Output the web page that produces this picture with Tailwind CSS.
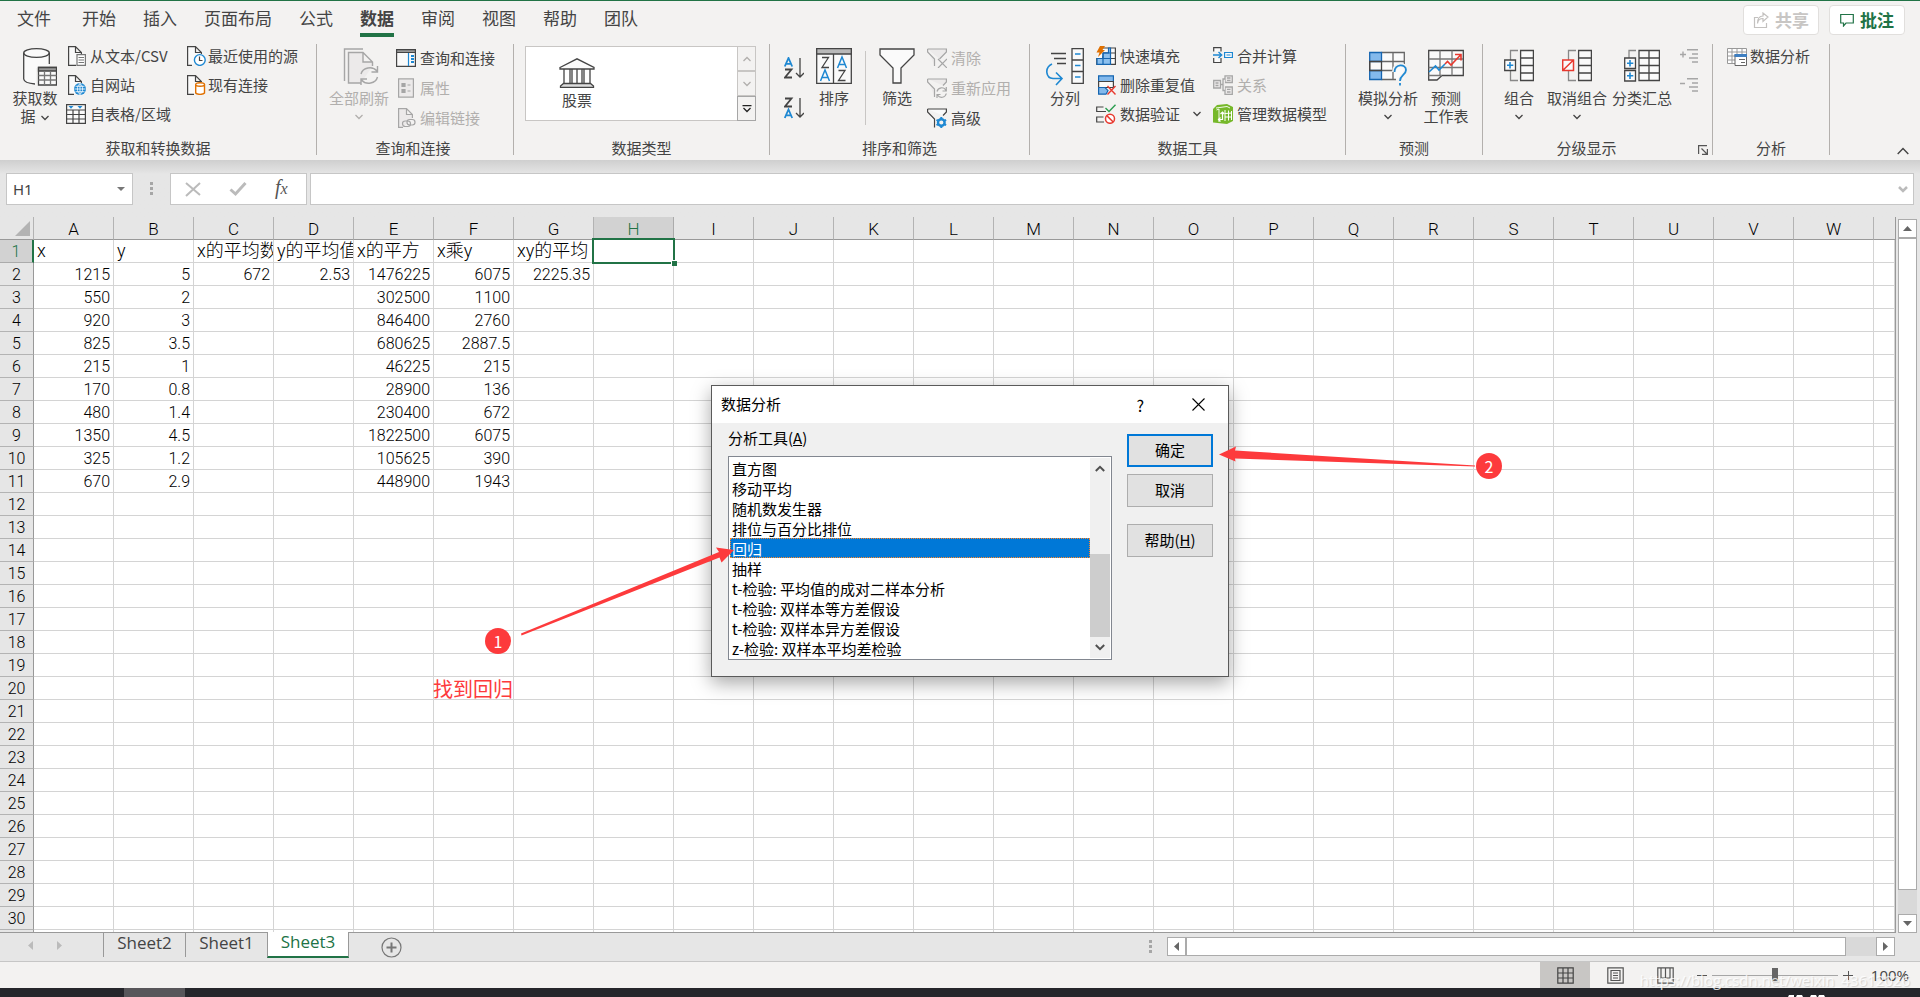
<!DOCTYPE html>
<html lang="zh-CN">
<head>
<meta charset="utf-8">
<title>Excel - 数据分析</title>
<script src="https://cdn.jsdelivr.net/npm/@tailwindcss/browser@4"></script>
</head>
<body class="relative flex h-screen min-h-[600px] flex-col overflow-hidden bg-[#e6e6e6] font-['Noto_Sans_CJK_SC',sans-serif] text-[15px] text-[#444]">

<!-- Ribbon -->
<header class="shrink-0 border-t border-[#217346] bg-[#f3f2f1]">
  <div class="flex h-9 items-start justify-between pr-[15px]">
    <nav class="flex h-9 gap-[27px] pl-[17px] text-[17px] leading-[34px]" aria-label="功能区选项卡">
      <button class="mr-1 h-[34px]">文件</button>
      <button class="h-[34px]">开始</button>
      <button class="h-[34px]">插入</button>
      <button class="h-[34px]">页面布局</button>
      <button class="h-[34px]">公式</button>
      <button class="relative h-[34px] font-bold">数据<span class="absolute inset-x-0 -bottom-0.5 h-1 bg-[#217346]"></span></button>
      <button class="h-[34px]">审阅</button>
      <button class="h-[34px]">视图</button>
      <button class="h-[34px]">帮助</button>
      <button class="h-[34px]">团队</button>
    </nav>
    <div class="flex gap-2.5 pt-1 text-[17px] leading-7 font-bold">
      <button class="flex h-[30px] w-[76px] items-center justify-center gap-1.5 rounded border border-[#e1dfdd] bg-white text-[#c8c6c4]" disabled>
        <svg class="size-4" viewBox="0 0 16 16" fill="none" stroke="#c3c1bf" stroke-width="1.2"><path d="M5 5.500H1.500V15.500H13.500V11"/><path d="M4.500 11.500C5 8 7 6.500 10 6.500V9.500L15 5L10 1V4C6.500 4 4.500 7 4.500 11.500Z"/></svg>共享</button>
      <button class="flex h-[30px] w-[76px] items-center justify-center gap-1.5 rounded border border-[#e1dfdd] bg-white text-[#217346]">
        <svg class="size-[14px]" viewBox="0 0 14 14" fill="none" stroke="#217346" stroke-width="1.200"><path d="M.7 1.500H13.300V10H6L3.500 13V10H.7Z"/></svg>批注</button>
    </div>
  </div>

  <div class="flex pt-[7px] pb-[5px] leading-[18px]">
    <section class="flex h-[111px] w-[317px] shrink-0 flex-col justify-between border-r border-[#b3b0ad]">
      <div class="flex gap-1 pl-2">
        <button class="flex w-[54px] flex-col items-center gap-[3px] pt-1">
          <svg class="ml-2 h-[38px] w-9" viewBox="0 0 36 38" fill="none" stroke="#444" stroke-width="1.300"><path d="M3 5V31C3 33.500 8 36 15 36V20H28V5" fill="#fafafa" stroke="none"/><ellipse cx="15.500" cy="5" rx="12.800" ry="4.300" fill="#fafafa"/><path d="M2.700 5V31C3 33.500 8 35.500 14 36M28.300 5V16"/><path d="M17.500 19.500H35.500V37H17.500Z" fill="#fafafa"/><path d="M17.500 19.500H35.500V23H17.500Z" fill="#999"/><path d="M17.500 27.500H35.500M17.500 32H35.500M23.500 23V37M29.500 23V37" stroke="#777"/></svg>
          <span>获取数<br>据<svg class="ml-1 inline h-2 w-2.5" viewBox="0 0 10 8" fill="none" stroke="#444" stroke-width="1.300"><path d="M1.500 2L5 5.500L8.500 2"/></svg></span>
        </button>
        <div class="flex w-[116px] flex-col gap-[9px] pt-0.5">
          <button class="flex h-5 items-center gap-1 whitespace-nowrap"><svg class="size-5 shrink-0" viewBox="0 0 20 20" fill="none" stroke="#444" stroke-width="1.200"><path d="M10 19.400H2.600V.6H9.500L15.400 6.500V8M9.500 .6V6.500H15.400" fill="#fafafa"/><path d="M11 8.600H19.400V19.400H11Z" fill="#fff" stroke="#777"/><path d="M12.500 11.500H18M12.500 14H18M12.500 16.500H18" stroke="#777"/></svg>从文本/CSV</button>
          <button class="flex h-5 items-center gap-1 whitespace-nowrap"><svg class="size-5 shrink-0" viewBox="0 0 20 20" fill="none" stroke="#444" stroke-width="1.200"><path d="M8 19.400H2.600V.6H9.500L15.400 6.500V8M9.500 .6V6.500H15.400" fill="#fafafa"/><circle cx="14" cy="14" r="6" fill="#1e88d2" stroke="none"/><path d="M14 8.500V19.500M8.500 14H19.500M9.500 11.300H18.500M9.500 16.700H18.500M14 8.500C10.500 11 10.500 17 14 19.500C17.500 17 17.500 11 14 8.500" stroke="#fff" stroke-width=".8"/></svg>自网站</button>
          <button class="flex h-5 items-center gap-1 whitespace-nowrap"><svg class="size-5 shrink-0" viewBox="0 0 20 20" fill="none" stroke="#444" stroke-width="1.200"><path d="M.6 .6H19.400V19.400H.6Z" fill="#fafafa"/><path d="M.6 6H19.400M.6 10.500H19.400M.6 15H19.400M7 6V19.400M13 6V19.400"/><path d="M2.500 2H7.500L5 4.800ZM11.500 2H16.500L14 4.800Z" fill="#1e88d2" stroke="none"/></svg>自表格/区域</button>
        </div>
        <div class="flex flex-col gap-[9px] pt-0.5">
          <button class="flex h-5 items-center gap-0.5 whitespace-nowrap"><svg class="size-5 shrink-0" viewBox="0 0 20 20" fill="none" stroke="#444" stroke-width="1.200"><path d="M6 19.400H1.600V.6H9.500L15.400 6.500V8M9.500 .6V6.500H15.400" fill="#fafafa"/><circle cx="13.800" cy="14" r="5.400" fill="#fff" stroke="#1e88d2" stroke-width="1.400"/><path d="M13.500 10.500V14.500H16.500"/></svg>最近使用的源</button>
          <button class="flex h-5 items-center gap-0.5 whitespace-nowrap"><svg class="size-5 shrink-0" viewBox="0 0 20 20" fill="none" stroke="#444" stroke-width="1.200"><path d="M8 19.400H1.600V.6H9.500L15.400 6.500V7M9.500 .6V6.500H15.400" fill="#fafafa"/><path d="M9.700 9.500V18C11 19.800 17 19.800 18.500 18V9.500" fill="#fff" stroke="#e07000" stroke-width="1.400"/><ellipse cx="14.100" cy="9.500" rx="4.400" ry="1.800" fill="#fff" stroke="#e07000" stroke-width="1.400"/></svg>现有连接</button>
        </div>
      </div>
      <h2 class="text-center leading-[14px]">获取和转换数据</h2>
    </section>

    <section class="flex h-[111px] w-[197px] shrink-0 flex-col justify-between border-r border-[#b3b0ad]">
      <div class="flex gap-1.5 pl-[11px]">
        <button class="flex w-[62px] flex-col items-center gap-[3px] pt-1 text-[#b1afad]" disabled>
          <svg class="ml-1 h-[38px] w-9" viewBox="0 0 36 38" fill="none" stroke="#a6a6a6" stroke-width="1.400"><path d="M1.500 33V1H20"/><path d="M18 35H5.500V4.500H20L29.500 14V18M20 4.500V14H29.500" fill="#eceaea"/><path d="M18 26A9 8 0 0 1 34 23M34.500 18V24H28.500M34.500 29A9 8 0 0 1 18.500 32M18 37V31H24"/></svg>
          <span>全部刷新</span>
          <svg class="mt-[3px] h-2 w-2.5" viewBox="0 0 10 8" fill="none" stroke="#b1afad" stroke-width="1.300"><path d="M1.500 2L5 5.500L8.500 2"/></svg>
        </button>
        <div class="flex flex-col gap-2.5 pt-1">
          <button class="flex h-5 items-center gap-1 whitespace-nowrap"><svg class="size-5" viewBox="0 0 20 20" fill="none" stroke="#444" stroke-width="1.200"><path d="M.6 1.600H19.400V18.400H.6Z" fill="#fafafa"/><path d="M.6 1.600H19.400V4.500H.6Z" fill="#999"/><path d="M12.500 5V18" stroke="#1e88d2"/><path d="M15 8H18M15 11H18M15 14H18" stroke="#1e88d2" stroke-width="2"/></svg>查询和连接</button>
          <button class="flex h-5 items-center gap-1 whitespace-nowrap text-[#b1afad]" disabled><svg class="size-5" viewBox="0 0 20 20" fill="none" stroke="#a6a6a6" stroke-width="1.200"><path d="M2.600 .8H17.400V19.200H2.600Z" fill="#eceaea"/><path d="M6 5.500H9V8.500H6ZM6 11.500H9V14.500H6Z" fill="#a6a6a6"/><path d="M11.500 7H14.500M11.500 13H14.500"/></svg>属性</button>
          <button class="flex h-5 items-center gap-1 whitespace-nowrap text-[#b1afad]" disabled><svg class="size-5" viewBox="0 0 20 20" fill="none" stroke="#a6a6a6" stroke-width="1.200"><path d="M7 19.400H2.600V.6H10.500L16.400 6.500V10M10.500 .6V6.500H16.400" fill="#eceaea"/><rect x="6.500" y="13" width="8" height="5.500" rx="2.700" fill="none"/><rect x="11" y="11.500" width="8" height="5.500" rx="2.700"/></svg>编辑链接</button>
        </div>
      </div>
      <h2 class="pr-1 text-center leading-[14px]">查询和连接</h2>
    </section>

    <section class="flex h-[111px] w-64 shrink-0 flex-col justify-between border-r border-[#b3b0ad]">
      <div class="mt-0.5 ml-[11px] flex h-[75px] w-[231px] border border-[#c8c6c4] bg-white">
        <button class="ml-[17px] flex w-[68px] flex-col items-center gap-[3px] pt-[11px]">
          <svg class="h-[30px] w-9" viewBox="0 0 36 30" fill="none" stroke="#444" stroke-width="1.300"><path d="M1 9.500L18 .8L35 9.500V11H1Z" fill="#fafafa"/><path d="M5 11V25M11 11V25M13 11V25M18 11V25M23 11V25M25 11V25M31 11V25"/><path d="M4.500 25.500H31.500L34.500 28V29.500H1.500V28Z" fill="#ddd"/></svg>
          <span>股票</span>
        </button>
        <div class="-my-px -mr-px ml-auto flex w-[19px] flex-col">
          <button class="grid flex-1 place-items-center border border-[#c8c6c4] bg-[#f3f2f1]" aria-label="上一行"><svg class="h-2 w-2.5" viewBox="0 0 10 8" fill="none" stroke="#b1afad" stroke-width="1.300"><path d="M1.500 6L5 2.500L8.500 6"/></svg></button>
          <button class="grid flex-1 place-items-center border border-[#c8c6c4] bg-[#f3f2f1]" aria-label="下一行"><svg class="h-2 w-2.5" viewBox="0 0 10 8" fill="none" stroke="#b1afad" stroke-width="1.300"><path d="M1.500 2L5 5.500L8.500 2"/></svg></button>
          <button class="grid flex-1 place-items-center border border-[#a6a6a6] bg-[#f3f2f1]" aria-label="其他"><svg class="h-2 w-2.5" viewBox="0 0 10 8" fill="none" stroke="#222" stroke-width="1.300"><path d="M.5 .7H9.500M1.500 3L5 6.500L8.500 3"/></svg></button>
        </div>
      </div>
      <h2 class="text-center leading-[14px]">数据类型</h2>
    </section>

    <section class="flex h-[111px] w-[260px] shrink-0 flex-col justify-between border-r border-[#b3b0ad]">
      <div class="flex pl-3.5">
        <div class="flex w-5 flex-col gap-[18px] pt-[13px]">
          <button aria-label="升序"><svg class="block h-[22px] w-5" viewBox="0 0 20 22" fill="none" stroke-width="1.800"><path d="M.8 9.500L4.500 1L8.200 9.500M2 6.800H7" stroke="#1e88d2"/><path d="M1 12.500H7.500L1 20.500H8" stroke="#444"/><path d="M16 1V20M12 16L16 20L20 16" stroke="#444" stroke-width="1.300"/></svg></button>
          <button aria-label="降序"><svg class="block h-[22px] w-5" viewBox="0 0 20 22" fill="none" stroke-width="1.800"><path d="M1 1.500H7.500L1 9.500H8" stroke="#444"/><path d="M.8 21L4.500 12.500L8.200 21M2 18.300H7" stroke="#1e88d2"/><path d="M16 1V20M12 16L16 20L20 16" stroke="#444" stroke-width="1.300"/></svg></button>
        </div>
        <button class="ml-[7px] flex w-[46px] flex-col items-center gap-[3px] pt-1">
          <svg class="h-[38px] w-9" viewBox="0 0 36 38" fill="none" stroke="#444" stroke-width="1.300"><path d="M.7 .7H35.300V35.300H.7Z" fill="#fafafa"/><path d="M.7 .7H35.300V6H.7Z" fill="#b8b8b8"/><path d="M17.500 6V35M6 9.500H12.500L6 19.500H13M22.500 22.500H29L22.500 32.500H29.500"/><path d="M4.500 33L9 22L13.500 33M6 29.500H12M21.500 20L26 9L30.500 20M23 16.500H29" stroke="#1e88d2" stroke-width="1.500"/></svg>
          <span>排序</span>
        </button>
        <div class="mt-[7px] ml-2 h-[74px] w-px bg-[#c8c6c4]"></div>
        <button class="ml-2 flex w-[46px] flex-col items-center gap-[3px] pt-1">
          <svg class="h-[38px] w-9" viewBox="0 0 36 38" fill="#fafafa" stroke="#444" stroke-width="1.300"><path d="M1 1H35V7L22 20V35H14V20L1 7Z"/></svg>
          <span>筛选</span>
        </button>
        <div class="ml-[7px] flex flex-col gap-2.5 pt-1">
          <button class="flex h-5 items-center gap-1 whitespace-nowrap text-[#b1afad]" disabled><svg class="size-5" viewBox="0 0 20 20" fill="none" stroke="#a6a6a6" stroke-width="1.200"><path d="M.6 1H19.400V4L12.500 11M7.500 18V11L.6 4V1" fill="#eceaea"/><path d="M11 11L20 20M20 11L11 20"/></svg>清除</button>
          <button class="flex h-5 items-center gap-1 whitespace-nowrap text-[#b1afad]" disabled><svg class="size-5" viewBox="0 0 20 20" fill="none" stroke="#a6a6a6" stroke-width="1.200"><path d="M.6 1H19.400V4L16 7.500M7.500 19V11L.6 4V1" fill="#eceaea"/><path d="M10 13.500A4.800 4.800 0 0 1 19 12.500M19.300 9V13H15.500M19.300 15.500A4.800 4.800 0 0 1 10.500 17M10 20V16.500H13.500"/></svg>重新应用</button>
          <button class="flex h-5 items-center gap-1 whitespace-nowrap"><svg class="size-5" viewBox="0 0 20 20" fill="none" stroke="#444" stroke-width="1.200"><path d="M.6 1H19.400V4L16 7.500M7.500 19.500V11L.6 4V1" fill="#fafafa"/><circle cx="14.300" cy="14.500" r="3.300" stroke="#1e88d2" stroke-width="2.400"/><path d="M14.300 9V11M14.300 18V20M9.500 11.800L11.300 12.800M17.300 16.200L19.100 17.200M9.500 17.200L11.300 16.200M17.300 12.800L19.100 11.800" stroke="#1e88d2" stroke-width="2"/></svg>高级</button>
        </div>
      </div>
      <h2 class="text-center leading-[14px]">排序和筛选</h2>
    </section>

    <section class="flex h-[111px] w-[316px] shrink-0 flex-col justify-between border-r border-[#b3b0ad]">
      <div class="flex gap-2 pl-3">
        <button class="flex w-[46px] flex-col items-center gap-[3px] pt-1">
          <svg class="h-[38px] w-[38px]" viewBox="0 0 38 38" fill="none" stroke="#444" stroke-width="1.300"><path d="M5 5.500H20M8 10.500H20M11 15.500H20"/><path d="M26 .7H37.300V35.300H26ZM26 12H37.300M26 23.500H37.300" fill="#fafafa"/><path d="M29 6H34.500M29 17.500H34.500M29 29H34.500M6 16C-2 20 0 30 7 30.500H15.500M10 24.500L16 30.500L10 37" stroke="#1e88d2" stroke-width="1.600"/></svg>
          <span>分列</span>
        </button>
        <div class="flex w-[109px] flex-col gap-[9px] pt-0.5">
          <button class="flex h-5 items-center gap-1 whitespace-nowrap"><svg class="size-5 shrink-0" viewBox="0 0 20 20" fill="none" stroke="#444" stroke-width="1.200"><path d="M6 2H19.400V18.400H.8V12" fill="#fafafa"/><path d="M.8 12.500H19.400M7 7H19.400M13.500 2V18.400M7 10V18.400"/><path d="M12.500 2H14.500V18.400H1V12.500H7V7H12.500Z" stroke="#1565b0" fill="#8cc0ee"/><path d="M1 12.500H14M7 7V18.400M7 7H14" stroke="#1565b0"/><path d="M4 0H9L6.500 4H9L2 11L3.500 6.500H.5Z" fill="#e07000" stroke="none"/></svg>快速填充</button>
          <button class="flex h-5 items-center gap-1 whitespace-nowrap"><svg class="size-5 shrink-0" viewBox="0 0 20 20" fill="none" stroke="#1565b0" stroke-width="1.200"><path d="M2.600 .8H17.400V6.500H2.600Z" fill="#83b9ec"/><path d="M2.600 6.500H17.400V12.500H2.600Z" fill="#fafafa" stroke="#444"/><path d="M10 19.200H2.600V12.500H9L12 15.500Z" fill="#83b9ec"/><path d="M11.500 11L19.500 19.500M19.500 11L11.500 19.500" stroke="#e8392f" stroke-width="1.400"/></svg>删除重复值</button>
          <button class="flex h-5 items-center gap-1 whitespace-nowrap"><svg class="size-5 shrink-0" viewBox="0 0 20 20" fill="none" stroke="#444" stroke-width="1.200"><path d="M7.500 3H.7V7.500H10M7.500 13H.7V18H8"/><path d="M9.500 4L13 7.500L19.500 .8" stroke="#2a9d4f" stroke-width="1.400"/><circle cx="14" cy="14.800" r="4.500" fill="#fff" stroke="#e8392f" stroke-width="1.500"/><path d="M10.800 11.600L17.200 18" stroke="#e8392f" stroke-width="1.500"/></svg>数据验证<svg class="ml-2 h-2 w-2.5 shrink-0" viewBox="0 0 10 8" fill="none" stroke="#444" stroke-width="1.300"><path d="M1.500 2L5 5.500L8.500 2"/></svg></button>
        </div>
        <div class="flex flex-col gap-[9px] pt-0.5">
          <button class="flex h-5 items-center gap-1 whitespace-nowrap"><svg class="size-5 shrink-0" viewBox="0 0 20 20" fill="none" stroke="#444" stroke-width="1.200"><path d="M.7 5.500V1.600H8V5.500M.7 12V16.500H8V12" fill="#fafafa"/><path d="M0 9H8.500M5.500 6L8.700 9L5.500 12" stroke="#1e88d2" stroke-width="1.400"/><path d="M11.600 6.500H19.400V11.500H11.600ZM13.500 9H17.500" stroke="#1e88d2" fill="#fafafa"/></svg>合并计算</button>
          <button class="flex h-5 items-center gap-1 whitespace-nowrap text-[#b1afad]" disabled><svg class="size-5 shrink-0" viewBox="0 0 20 20" fill="#eceaea" stroke="#a6a6a6" stroke-width="1.300"><path d="M.7 5.500H7.500V13H.7ZM12 .8H19.300V7.500H12ZM12 12H19.300V19.300H12Z"/><path d="M7.500 9.500H10M12 4H10V15.500H12M2.500 8H5.500M2.500 10.500H5.500M14 3H17.500M14 5.300H17.500M14 14.300H17.500M14 17H17.500"/></svg>关系</button>
          <button class="flex h-5 items-center gap-1 whitespace-nowrap"><svg class="size-5 shrink-0" viewBox="0 0 20 20"><path d="M0 5L4 1L14 0L20 3V17L14 20L0 18.500Z" fill="#76b82a"/><path d="M3.500 6L6 5V18M3 4L14 2.500L17 4" fill="none" stroke="#fff" stroke-width=".9"/><path d="M12 6V17M15.500 6.500V16.500M18.500 7V16M12 9.500L19 9M12 13H19" stroke="#fff" stroke-width="1"/><path d="M6 15.500H9.500V8.500M7.500 10L9.500 8L11.300 10M7.500 13.500L5.500 15.500L7.500 17.500" fill="none" stroke="#fff" stroke-width="1.200"/></svg>管理数据模型</button>
        </div>
      </div>
      <h2 class="text-center leading-[14px]">数据工具</h2>
    </section>

    <section class="flex h-[111px] w-[137px] shrink-0 flex-col justify-between border-r border-[#b3b0ad]">
      <div class="flex gap-[3px] pl-[11px]">
        <button class="flex w-[62px] flex-col items-center gap-[3px] pt-1">
          <svg class="h-[38px] w-[38px]" viewBox="0 0 38 38" fill="none" stroke="#444" stroke-width="1.300"><path d="M.7 4.500H35.300V31.500H.7Z" fill="#fafafa" stroke="none"/><path d="M12.500 4.500H35.300V16M12.500 31.500H27M12.500 13.500H35.300M.7 13.500V22.500M12.500 22.500H26M24 4.500V31.500" stroke="#666"/><path d="M.7 4.500H12.500V13.500H.7ZM.7 22.500H12.500V31.500H.7Z" fill="#83b9ec" stroke="#1565b0"/><path d="M.7 13.500H12.500V22.500H.7Z" stroke="#444"/><path d="M25 24C25 14.500 37 15 37 22C37 27 31 27 31 33M31 35.500V38" stroke="#f3f2f1" stroke-width="4"/><path d="M25.500 24C25.500 15.500 37 15.500 37 22C37 27 31 27 31 33M31 35V37.500" stroke="#1e88d2" stroke-width="1.800"/></svg>
          <span>模拟分析</span>
          <svg class="mt-[3px] h-2 w-2.5" viewBox="0 0 10 8" fill="none" stroke="#444" stroke-width="1.300"><path d="M1.500 2L5 5.500L8.500 2"/></svg>
        </button>
        <button class="flex w-12 flex-col items-center gap-[3px] pt-1">
          <svg class="h-[38px] w-9" viewBox="0 0 36 38" fill="none" stroke="#444" stroke-width="1.300"><path d="M.7 2.500H35.300V27.500H14L9 32H.7Z" fill="#fafafa"/><path d="M.7 11H35M.7 19.500H35M12 2.500V27.500M24 2.500V27.500M.7 27.500H14" stroke="#777"/><path d="M1 24L7.500 18L11 22L17 16" stroke="#1e88d2" stroke-width="1.600"/><path d="M17 16L19.500 13.500L23 17L32.500 7M27 6.500H33V12.500" stroke="#e8392f" stroke-width="1.600"/></svg>
          <span class="whitespace-nowrap">预测<br>工作表</span>
        </button>
      </div>
      <h2 class="text-center leading-[14px]">预测</h2>
    </section>

    <section class="flex h-[111px] w-[230px] shrink-0 flex-col justify-between border-r border-[#b3b0ad]">
      <div class="flex pl-4">
        <button class="flex w-10 flex-col items-center gap-[3px] pt-1">
          <svg class="h-[38px] w-[30px]" viewBox="0 0 30 38" fill="#fafafa" stroke="#444" stroke-width="1.300"><path d="M14 2.500H6.500V32.500H14" fill="none" stroke="#888"/><path d="M16.600 2.500H29.400V32.500H16.600ZM16.600 10H29.400M16.600 17.500H29.400M16.600 25H29.400"/><path d="M.7 12H11.500V22.500H.7Z"/><path d="M6 14V20.500M3 17.200H9.300" stroke="#1e88d2" stroke-width="1.600"/></svg>
          <span>组合</span>
          <svg class="mt-[3px] h-2 w-2.5" viewBox="0 0 10 8" fill="none" stroke="#444" stroke-width="1.300"><path d="M1.500 2L5 5.500L8.500 2"/></svg>
        </button>
        <button class="ml-[7px] flex w-[62px] flex-col items-center gap-[3px] pt-1">
          <svg class="h-[38px] w-[30px]" viewBox="0 0 30 38" fill="#fafafa" stroke="#444" stroke-width="1.300"><path d="M14 2.500H6.500V32.500H14" fill="none" stroke="#888"/><path d="M16.600 2.500H29.400V32.500H16.600ZM16.600 10H29.400M16.600 17.500H29.400M16.600 25H29.400"/><path d="M.7 12H11.500V22.500H.7ZM.7 22.500L11.500 12" stroke="#e8392f" stroke-width="1.500"/></svg>
          <span>取消组合</span>
          <svg class="mt-[3px] h-2 w-2.5" viewBox="0 0 10 8" fill="none" stroke="#444" stroke-width="1.300"><path d="M1.500 2L5 5.500L8.500 2"/></svg>
        </button>
        <button class="ml-[3px] flex w-[62px] flex-col items-center gap-[3px] pt-1">
          <svg class="h-[38px] w-9" viewBox="0 0 36 38" fill="#fafafa" stroke="#444" stroke-width="1.300"><path d="M12 2.500H5V10" fill="none" stroke="#888"/><path d="M15 2.500H35.400V32.500H15ZM15 10H35.400M15 17.500H35.400M15 25H35.400M25 2.500V32.500"/><path d="M.7 10H11.500V20.500H.7ZM.7 22.500H11.500V33H.7Z"/><path d="M6 12V18.500M3 15.200H9.300M6 24.500V31M3 27.800H9.300" stroke="#1e88d2" stroke-width="1.600"/></svg>
          <span>分类汇总</span>
        </button>
        <div class="ml-[7px] flex flex-col gap-[15px] pt-[5px]">
          <button disabled aria-label="显示明细数据"><svg class="block h-3.5 w-[18px]" viewBox="0 0 18 14" fill="none" stroke="#a6a6a6" stroke-width="1.400"><path d="M0 5.500H6M3 2.500V8.500M7 .8H18M12 5H18M9 9H18M12 13H18"/></svg></button>
          <button disabled aria-label="隐藏明细数据"><svg class="block h-3.5 w-[18px]" viewBox="0 0 18 14" fill="none" stroke="#a6a6a6" stroke-width="1.400"><path d="M0 5.500H5M7 .8H18M12 5H18M9 9H18M12 13H18"/></svg></button>
        </div>
      </div>
      <div class="flex items-end pr-1">
        <h2 class="flex-1 pr-2 text-center leading-[14px]">分级显示</h2>
        <button aria-label="分级显示设置"><svg class="block size-2.5" viewBox="0 0 10 10" fill="none" stroke="#555" stroke-width="1.200"><path d="M.6 9V.6H9M3.500 3.500L9 9M9.400 4V9.400H4"/></svg></button>
      </div>
    </section>

    <section class="flex h-[111px] w-[117px] shrink-0 flex-col justify-between border-r border-[#b3b0ad]">
      <div class="pt-0.5 pl-3.5">
        <button class="flex h-5 items-center gap-[3px] whitespace-nowrap"><svg class="size-5 shrink-0" viewBox="0 0 20 20" fill="none" stroke="#999"><path d="M.5 2.500H19.500V17.500H.5ZM.5 6H19.500M.5 10H19.500M.5 14H19.500M5 2.500V17.500M10 2.500V17.500M15 2.500V17.500" fill="#fff"/><path d="M8 8.500H19.500V19.500H8Z" fill="#fff" stroke="#666"/><path d="M7.500 8H20V11H7.500Z" fill="#3f7fc1" stroke="none"/><path d="M12 13.500H18M14 16.500H18" stroke="#666"/></svg>数据分析</button>
      </div>
      <h2 class="text-center leading-[14px]">分析</h2>
    </section>

    <div class="flex flex-1 items-end justify-end pr-[11px]">
      <button aria-label="折叠功能区"><svg class="block h-2 w-3" viewBox="0 0 12 8" fill="none" stroke="#444" stroke-width="1.400"><path d="M.7 7L6 1.500L11.300 7"/></svg></button>
    </div>
  </div>
</header>

<!-- Formula bar -->
<div class="flex shrink-0 items-start bg-linear-to-b from-[#cfcfcf] to-[#e6e6e6] to-25% px-1.5 pt-[13px] pb-3">
  <label class="flex h-8 w-[127px] items-center border border-[#c6c6c6] bg-white pr-[7px]">
    <input class="w-full min-w-0 bg-transparent pl-1.5 font-['Noto_Sans',sans-serif] text-[15px] text-[#444] outline-none" value="H1" aria-label="名称框">
    <svg class="h-1 w-2 shrink-0" viewBox="0 0 8 4"><path d="M0 0H8L4 4Z" fill="#777"/></svg>
  </label>
  <svg class="mx-4 h-8 w-[5px] shrink-0" viewBox="0 0 5 32"><path d="M1 9H4V12H1ZM1 14H4V17H1ZM1 19H4V22H1Z" fill="#a6a6a6"/></svg>
  <div class="flex h-8 w-[137px] items-center gap-7 border border-[#c6c6c6] bg-white pl-3.5">
    <button aria-label="取消"><svg class="block size-4" viewBox="0 0 16 16" stroke="#bbb" stroke-width="2" fill="none"><path d="M1 2L15 14M15 2L1 15"/></svg></button>
    <button aria-label="输入"><svg class="block h-4 w-[18px]" viewBox="0 0 18 16" stroke="#bbb" stroke-width="3" fill="none"><path d="M1.500 8.500L6.500 13L16.500 2"/></svg></button>
    <button class="font-['Liberation_Serif',serif] text-xl leading-5 text-[#555] italic" aria-label="插入函数">f<span class="text-base">x</span></button>
  </div>
  <label class="ml-[3px] flex h-8 flex-1 items-center border border-[#c6c6c6] bg-white pr-[5px]">
    <input class="min-w-0 flex-1 bg-transparent px-2 outline-none" aria-label="编辑栏">
    <svg class="h-[7px] w-2.5" viewBox="0 0 10 7" fill="none" stroke="#bbb" stroke-width="2.500"><path d="M1 1L5 5L9 1"/></svg>
  </label>
</div>

<!-- Worksheet -->
<main class="flex min-h-0 flex-1 overflow-hidden">
  <div class="min-w-0 flex-1 overflow-hidden border-r border-b border-[#999] bg-white">
    <table id="grid" class="w-full table-fixed border-separate border-spacing-0 font-[Roboto,'Noto_Sans_CJK_SC',sans-serif] text-base leading-5 font-light text-black"></table>
  </div>
  <div class="flex w-6 shrink-0 flex-col pt-0.5 pr-[3px] pl-0.5">
    <button class="grid h-[19px] shrink-0 place-items-center border border-[#ababab] bg-white" aria-label="向上滚动"><svg class="h-[5px] w-[9px]" viewBox="0 0 9 5"><path d="M0 5L4.500 0L9 5Z" fill="#666"/></svg></button>
    <div class="flex flex-1 flex-col bg-[#d9d9d9] pb-6"><div class="flex-1 border border-[#ababab] bg-white"></div></div>
    <button class="grid h-[19px] shrink-0 place-items-center border border-[#ababab] bg-white" aria-label="向下滚动"><svg class="h-[5px] w-[9px]" viewBox="0 0 9 5"><path d="M0 0L4.500 5L9 0Z" fill="#666"/></svg></button>
  </div>
</main>

<!-- Sheet tabs -->
<div class="flex h-[29px] shrink-0 items-start border-b border-[#c6c6c6] pr-[25px] font-['Open_Sans',sans-serif] text-[17px]">
  <button class="mt-2 ml-7" disabled aria-label="上一张"><svg class="block h-[9px] w-[5px]" viewBox="0 0 5 9"><path d="M5 0V9L0 4.500Z" fill="#bbb"/></svg></button>
  <button class="mt-2 ml-6" disabled aria-label="下一张"><svg class="block h-[9px] w-[5px]" viewBox="0 0 5 9"><path d="M0 0V9L5 4.500Z" fill="#bbb"/></svg></button>
  <button class="ml-[41px] h-6 w-[82px] border-l border-[#999] pb-1 leading-5">Sheet2</button>
  <button class="h-6 w-[82px] border-l border-[#999] pb-1 leading-5">Sheet1</button>
  <button class="-mt-px h-[26px] w-[82px] border-x border-b-2 border-x-[#999] border-b-[#217346] bg-white pb-1 leading-5 text-[#217346]">Sheet3</button>
  <button class="mt-1 ml-8" aria-label="新工作表"><svg class="block size-[21px]" viewBox="0 0 21 21" fill="none" stroke="#777" stroke-width="1.200"><circle cx="10.500" cy="10.500" r="9.500"/><path d="M10.500 5.500V15.500M5.500 10.500H15.500" stroke-width="2"/></svg></button>
  <div class="ml-auto flex items-center pt-1">
    <svg class="mr-3.5 h-[19px] w-[5px]" viewBox="0 0 5 19"><path d="M1 3H4V6H1ZM1 8H4V11H1ZM1 13H4V16H1Z" fill="#a6a6a6"/></svg>
    <button class="grid size-[19px] place-items-center border border-[#ababab] bg-white" aria-label="向左滚动"><svg class="h-[9px] w-[5px]" viewBox="0 0 5 9"><path d="M5 0V9L0 4.500Z" fill="#666"/></svg></button>
    <div class="flex h-[19px] w-[690px] bg-[#d9d9d9] pr-[30px]"><div class="flex-1 border border-[#ababab] bg-white"></div></div>
    <button class="grid size-[19px] place-items-center border border-[#ababab] bg-white" aria-label="向右滚动"><svg class="h-[9px] w-[5px]" viewBox="0 0 5 9"><path d="M0 0V9L5 4.500Z" fill="#666"/></svg></button>
  </div>
</div>

<!-- Status bar -->
<footer class="relative flex h-[26px] shrink-0 items-center justify-end bg-[#f3f2f1] pr-[11px]">
  <button class="grid h-full w-[50px] place-items-center bg-[#c8c6c4]" aria-label="普通"><svg class="size-[17px]" viewBox="0 0 17 17" fill="none" stroke="#444" stroke-width="1.200"><path d="M.8 .8H16.200V16.200H.8ZM.8 6H16.200M.8 11H16.200M6 .8V16.200M11 .8V16.200"/></svg></button>
  <button class="grid h-full w-[50px] place-items-center" aria-label="页面布局"><svg class="size-[17px]" viewBox="0 0 17 17" fill="none" stroke="#555" stroke-width="1.200"><path d="M.8 .8H16.200V16.200H.8ZM4 3.500H13V13.500H4ZM6 6H11M6 8.500H11M6 11H11"/></svg></button>
  <button class="grid h-full w-[50px] place-items-center" aria-label="分页预览"><svg class="size-[17px]" viewBox="0 0 17 17" fill="none" stroke="#555" stroke-width="1.200"><path d="M.8 .8H16.200V16.200H.8ZM4 .8V11H13V.8M8.500 .8V11"/></svg></button>
  <button class="ml-[7px]" aria-label="缩小"><svg class="block size-2.5" viewBox="0 0 10 10" stroke="#555"><path d="M0 5.500H10"/></svg></button>
  <input type="range" min="10" max="190" value="100" aria-label="缩放" class="mx-[5px] h-4 w-[126px] appearance-none bg-[linear-gradient(#a6a6a6,#a6a6a6)] bg-[length:100%_1px] bg-center bg-no-repeat [&::-webkit-slider-thumb]:h-3.5 [&::-webkit-slider-thumb]:w-1.5 [&::-webkit-slider-thumb]:appearance-none [&::-webkit-slider-thumb]:bg-[#666]">
  <button aria-label="放大"><svg class="block size-2.5" viewBox="0 0 10 10" stroke="#555"><path d="M0 5.500H10M5.500 1V10"/></svg></button>
  <span class="ml-4 w-10 text-right font-['Open_Sans',sans-serif] text-[15px]">100%</span>
  <span class="pointer-events-none absolute right-2.5 bottom-0 font-['Open_Sans',sans-serif] text-[15px] leading-4 text-white/80 [text-shadow:1px_1px_1px_rgba(0,0,0,0.15)]">https://blog.csdn.net/weixin_43612026</span>
</footer>

<!-- Top edge of the desktop taskbar -->
<div class="flex h-[9px] shrink-0 items-end bg-[#25262b] pl-[124px]">
  <div class="h-full w-[61px] bg-[#57565a]"></div>
  <svg class="mr-[94px] ml-auto h-0.5 w-[38px]" viewBox="0 0 38 2" fill="#fff"><path d="M1 0H6V2H0ZM9 0H14L15 2H8ZM23 0H28L29 2H22ZM31 0H36L37 2H30Z"/></svg>
</div>

<!-- Data analysis dialog -->
<div role="dialog" aria-labelledby="dlg-title" class="absolute top-[385px] left-[711px] z-20 w-[518px] border border-[#5a5a5a] bg-[#f0f0f0] text-black shadow-[0_6px_18px_rgba(0,0,0,0.35)]">
  <div class="flex h-[37px] items-center bg-white pr-[23px] pl-[9px]">
    <h1 id="dlg-title" class="flex-1">数据分析</h1>
    <button class="mr-12 text-base leading-4" aria-label="帮助">?</button>
    <button aria-label="关闭"><svg class="block size-[13px]" viewBox="0 0 13 13" stroke="#000" stroke-width="1.100"><path d="M.5 .5L12.500 12.500M12.500 .5L.5 12.500"/></svg></button>
  </div>
  <div class="flex items-start gap-[15px] pt-[5px] pr-[15px] pb-4 pl-4">
    <div class="flex-1">
      <label for="tools" class="block leading-5">分析工具(<u>A</u>)</label>
      <div class="mt-2 flex h-[204px] border border-[#828790] bg-white p-px">
        <select id="tools" size="10" class="h-[200px] flex-1 appearance-none overflow-hidden bg-transparent text-[15px] leading-5 outline-none [scrollbar-width:none]">
          <option class="h-5 min-h-0 px-0.5 py-0 leading-[18px]">直方图</option>
          <option class="h-5 min-h-0 px-0.5 py-0 leading-[18px]">移动平均</option>
          <option class="h-5 min-h-0 px-0.5 py-0 leading-[18px]">随机数发生器</option>
          <option class="h-5 min-h-0 px-0.5 py-0 leading-[18px]">排位与百分比排位</option>
          <option selected class="h-5 min-h-0 bg-[linear-gradient(#0078d7,#0078d7)] px-0.5 py-0 leading-[18px] outline-1 -outline-offset-1 outline-[#ff8728] outline-dotted [-webkit-text-fill-color:white]">回归</option>
          <option class="h-5 min-h-0 px-0.5 py-0 leading-[18px]">抽样</option>
          <option class="h-5 min-h-0 px-0.5 py-0 leading-[18px]">t-检验: 平均值的成对二样本分析</option>
          <option class="h-5 min-h-0 px-0.5 py-0 leading-[18px]">t-检验: 双样本等方差假设</option>
          <option class="h-5 min-h-0 px-0.5 py-0 leading-[18px]">t-检验: 双样本异方差假设</option>
          <option class="h-5 min-h-0 px-0.5 py-0 leading-[18px]">z-检验: 双样本平均差检验</option>
        </select>
        <div class="flex w-5 flex-col items-center bg-[#f0f0f0]">
          <svg class="my-[7px] h-[7px] w-2.5" viewBox="0 0 10 7" fill="none" stroke="#505050" stroke-width="2"><path d="M.8 6L5 1.800L9.200 6"/></svg>
          <div class="flex w-full flex-1 items-end"><div class="h-[83px] w-full bg-[#cdcdcd]"></div></div>
          <svg class="my-[7px] h-[7px] w-2.5" viewBox="0 0 10 7" fill="none" stroke="#505050" stroke-width="2"><path d="M.8 1L5 5.200L9.200 1"/></svg>
        </div>
      </div>
    </div>
    <div class="flex w-[86px] flex-col pt-1.5">
      <button class="h-[33px] border-2 border-[#0078d7] bg-[#e1e1e1]">确定</button>
      <button class="mt-[7px] h-[33px] border border-[#adadad] bg-[#e1e1e1]">取消</button>
      <button class="mt-[17px] h-[33px] border border-[#adadad] bg-[#e1e1e1]">帮助(<u>H</u>)</button>
    </div>
  </div>
</div>

<!-- Step annotations -->
<svg class="pointer-events-none absolute top-[440px] left-[485px] z-30 h-[220px] w-[1020px]" viewBox="0 0 1020 220" fill="#fd3a3c"><path d="M249 110L231 107.500L234 112L36 193.500L36.500 195.500L234.500 117.500L236.500 122.500Z"/><path d="M734 14.500L751 6.500L750 10.500L990 25.500V26.500L750 18.500L750.500 21.500Z"/></svg>
<span class="absolute top-[628px] left-[485px] z-30 grid size-[26px] place-items-center rounded-full bg-[#fd3a3c] text-base leading-4 text-white">1</span>
<span class="absolute top-[453px] left-[1476px] z-30 grid size-[26px] place-items-center rounded-full bg-[#fd3a3c] text-base leading-4 text-white">2</span>
<p class="absolute top-[676px] left-[433px] z-10 text-xl leading-[26px] text-[#fd3a3c]">找到回归</p>

<script>
const data = [
  ['x', 'y', 'x的平均数', 'y的平均值', 'x的平方', 'x乘y', 'xy的平均'],
  [1215, 5, 672, 2.53, 1476225, 6075, 2225.35],
  [550, 2, '', '', 302500, 1100],
  [920, 3, '', '', 846400, 2760],
  [825, 3.5, '', '', 680625, 2887.5],
  [215, 1, '', '', 46225, 215],
  [170, 0.8, '', '', 28900, 136],
  [480, 1.4, '', '', 230400, 672],
  [1350, 4.5, '', '', 1822500, 6075],
  [325, 1.2, '', '', 105625, 390],
  [670, 2.9, '', '', 448900, 1943],
];
const letters = 'ABCDEFGHIJKLMNOPQRSTUVW'.split('');
let html = '<colgroup><col class="w-[34px]">' + letters.map(() => '<col class="w-20">').join('') + '<col></colgroup>';
html += '<thead><tr><td class="h-[23px] border-r border-b border-r-[#b3b3b3] border-b-[#999] bg-[#e6e6e6] p-0"><svg class="ml-auto mr-[3px] block size-[15px]" viewBox="0 0 15 15"><path d="M15 0V15H0Z" fill="#b3b3b3"/></svg></td>';
html += letters.map(l => l === 'H'
  ? '<th scope="col" class="border-r border-b border-r-[#ababab] border-b-[#999] bg-[#d2d2d2] p-0 pt-0.5 text-[17px] font-light text-[#217346]">H</th>'
  : `<th scope="col" class="border-r border-b border-r-[#b3b3b3] border-b-[#999] bg-[#e6e6e6] p-0 pt-0.5 text-[17px] font-light">${l}</th>`).join('');
html += '<td class="border-b border-[#999] bg-[#e6e6e6] p-0"></td></tr></thead><tbody>';
for (let r = 1; r <= 31; r++) {
  const row = data[r - 1] || [];
  html += '<tr>' + (r === 1
    ? '<th scope="row" class="h-[23px] border-r-2 border-b border-r-[#217346] border-b-[#ababab] bg-[#d2d2d2] p-0 pt-0.5 font-light text-[#217346]">1</th>'
    : `<th scope="row" class="h-[23px] border-r border-b border-r-[#999] border-b-[#b3b3b3] bg-[#e6e6e6] p-0 pt-0.5 font-light">${r < 31 ? r : ''}</th>`);
  for (let c = 0; c < 24; c++) {
    const v = row[c] ?? '';
    if (r === 1 && c === 7)
      html += '<td class="relative border-r border-b border-[#d4d4d4] p-0"><span class="absolute -inset-0.5 z-10 border-2 border-[#217346]"></span><span class="absolute -right-1 -bottom-1 z-10 size-1.5 border-t border-l border-white bg-[#217346]"></span></td>';
    else if (typeof v === 'number')
      html += `<td class="border-r border-b border-[#d4d4d4] pt-0.5 pr-[3px] pb-0 pl-0 text-right">${v}</td>`;
    else if (v)
      html += `<td class="overflow-hidden border-r border-b border-[#d4d4d4] py-0 pr-0 pl-[3px] text-lg leading-[22px] whitespace-nowrap">${v}</td>`;
    else
      html += '<td class="border-r border-b border-[#d4d4d4] p-0"></td>';
  }
  html += '</tr>';
}
document.getElementById('grid').innerHTML = html + '</tbody>';
</script>
</body>
</html>
